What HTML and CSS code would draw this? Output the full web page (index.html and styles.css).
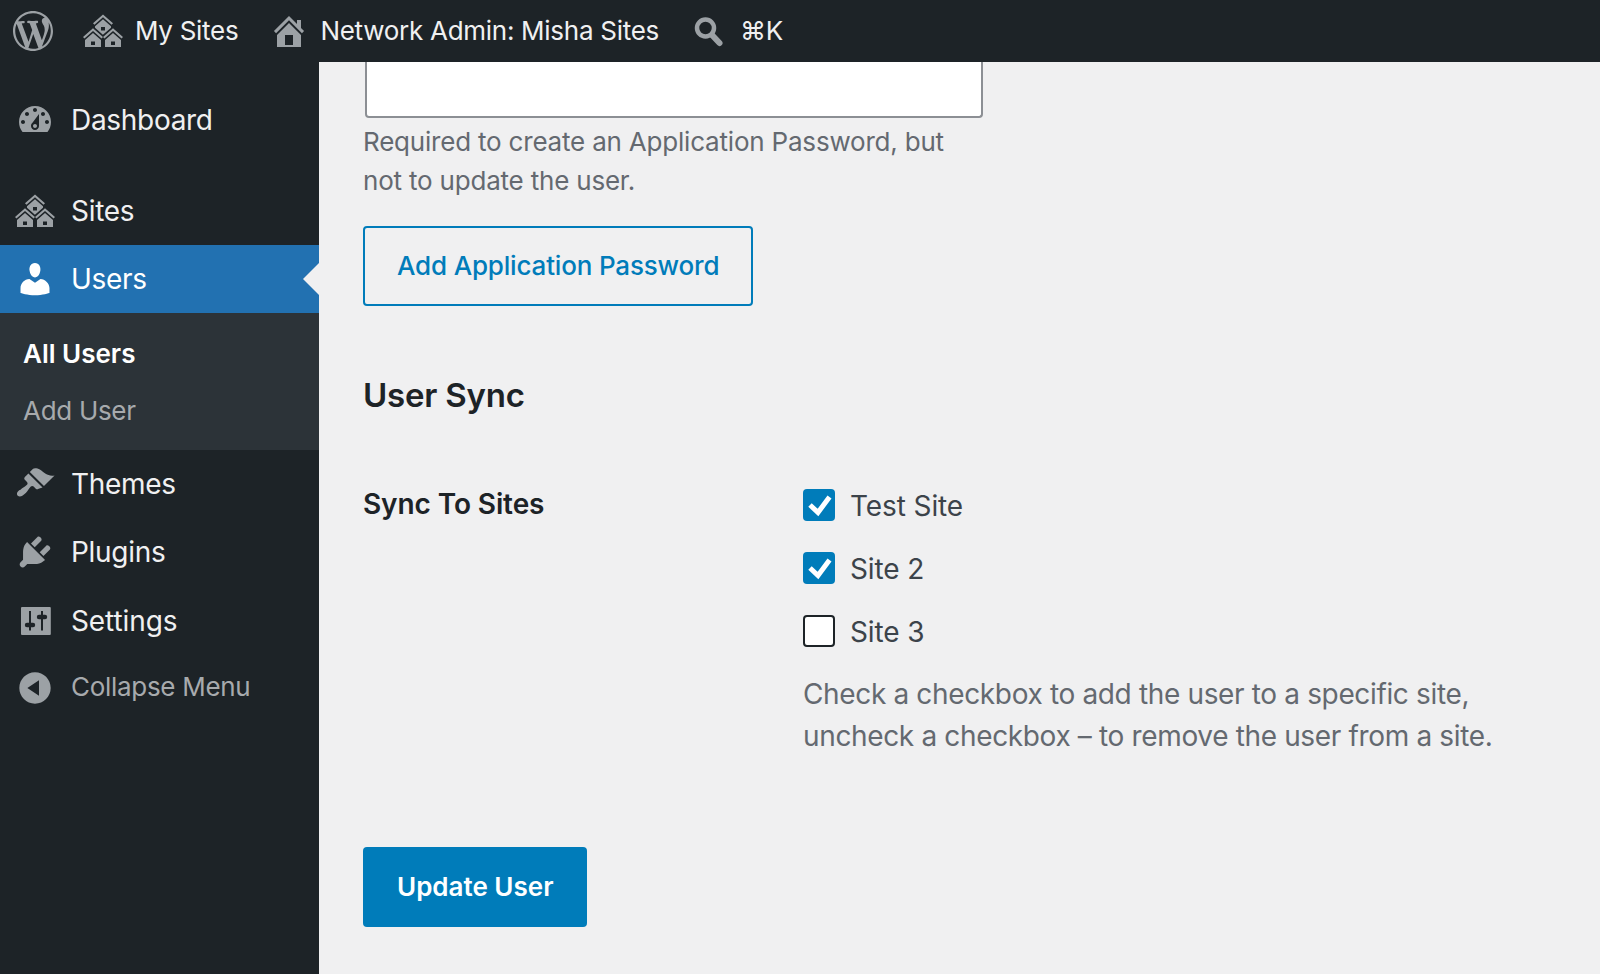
FILE: index.html
```html
<!DOCTYPE html>
<html lang="en">
<head>
<meta charset="utf-8">
<title>Users</title>
<link rel="stylesheet" href="styles.css">
</head>
<body>
<header class="topbar">
  <svg class="logo" viewBox="0 0 20 20"><path fill-rule="evenodd" d="M20 10c0-5.51-4.49-10-10-10C4.48 0 0 4.49 0 10c0 5.52 4.48 10 10 10 5.51 0 10-4.48 10-10zM7.78 15.37L4.37 6.22c.55-.02 1.17-.08 1.17-.08.5-.06.44-1.13-.06-1.11 0 0-1.45.11-2.37.11-.18 0-.37 0-.58-.01C4.12 2.69 6.87 1.11 10 1.11c2.33 0 4.45.87 6.05 2.34-.68-.11-1.65.39-1.65 1.58 0 .74.45 1.36.9 2.1.35.61.55 1.36.55 2.46 0 1.49-1.4 5-1.4 5l-3.03-8.37c.54-.02.82-.17.82-.17.5-.05.44-1.25-.06-1.22 0 0-1.44.12-2.38.12-.87 0-2.33-.12-2.33-.12-.5-.03-.56 1.2-.06 1.22l.92.08 1.26 3.41zM17.41 10c.24-.64.74-1.87.43-4.25.7 1.29 1.05 2.71 1.05 4.25 0 3.29-1.73 6.24-4.4 7.78.97-2.59 1.94-5.2 2.92-7.78zM6.1 18.09C3.12 16.65 1.11 13.53 1.11 10c0-1.3.23-2.48.72-3.59C3.25 10.3 4.67 14.2 6.1 18.09zm4.03-6.63l2.58 6.98c-.86.29-1.76.45-2.71.45-.79 0-1.57-.11-2.29-.33.81-2.38 1.62-4.74 2.42-7.1z"/></svg>
  <a class="bar-item sites">
    <svg class="bar-icon" viewBox="0 0 20 20"><path d="M14.27 6.87L10 3.14 5.73 6.87 5 6.14l5-4.38 5 4.38zM14 8.42l-4.05 3.43L6 8.38v-.74l4-3.5 4 3.5v.78zM11 9.7V8H9v1.7h2zm-1.73 4.03L5 10 .73 13.73 0 13l5-4.38L10 13zm10 0L15 10l-4.27 3.73L10 13l5-4.38L20 13zM5 11l4 3.5V18H1v-3.5zm10 0l4 3.5V18h-8v-3.5zM6 17v-1.7H4V17h2zm10 0v-1.7h-2V17h2z"/></svg>
    My Sites
  </a>
  <a class="bar-item network">
    <svg class="bar-icon" viewBox="0 0 20 20"><path d="M16 8.5l1.53 1.53-1.06 1.06L10 4.62l-6.47 6.47-1.06-1.06L10 2.5l4 4v-2h2v4zm-6-2.46l6 5.99V18H4v-5.97zM12 17v-5H8v5h4z"/></svg>
    Network Admin: Misha Sites
  </a>
  <a class="bar-item search">
    <svg class="search-icon" viewBox="0 0 30 34"><circle cx="11.5" cy="14" r="8.5"/><line class="handle" x1="18" y1="21" x2="25.5" y2="29"/></svg>
    ⌘K
  </a>
</header>
<div class="layout">
  <nav class="sidebar">
    <a class="menu-item first">
      <svg class="menu-icon" viewBox="0 0 20 20"><path fill-rule="evenodd" d="M3.76 16h12.48c1.1-1.37 1.76-3.11 1.76-5 0-4.42-3.58-8-8-8s-8 3.58-8 8c0 1.89.66 3.63 1.76 5zM10 4c.55 0 1 .45 1 1s-.45 1-1 1-1-.45-1-1 .45-1 1-1zM6 6c.55 0 1 .45 1 1s-.45 1-1 1-1-.45-1-1 .45-1 1-1zm8 0c.55 0 1 .45 1 1s-.45 1-1 1-1-.45-1-1 .45-1 1-1zm-5.37 5.55L12 7v6c0 1.1-.9 2-2 2s-2-.9-2-2c0-.57.24-1.08.63-1.45zM4 10c.55 0 1 .45 1 1s-.45 1-1 1-1-.45-1-1 .45-1 1-1zm12 0c.55 0 1 .45 1 1s-.45 1-1 1-1-.45-1-1 .45-1 1-1zm-5 3c0-.55-.45-1-1-1s-1 .45-1 1 .45 1 1 1 1-.45 1-1z"/></svg>
      Dashboard
    </a>
    <a class="menu-item sites-item">
      <svg class="menu-icon" viewBox="0 0 20 20"><path d="M14.27 6.87L10 3.14 5.73 6.87 5 6.14l5-4.38 5 4.38zM14 8.42l-4.05 3.43L6 8.38v-.74l4-3.5 4 3.5v.78zM11 9.7V8H9v1.7h2zm-1.73 4.03L5 10 .73 13.73 0 13l5-4.38L10 13zm10 0L15 10l-4.27 3.73L10 13l5-4.38L20 13zM5 11l4 3.5V18H1v-3.5zm10 0l4 3.5V18h-8v-3.5zM6 17v-1.7H4V17h2zm10 0v-1.7h-2V17h2z"/></svg>
      Sites
    </a>
    <a class="menu-item current">
      <svg class="menu-icon" viewBox="0 0 20 20"><path d="M10 9.25c-2.27 0-2.73-3.44-2.73-3.44C7 4.02 7.82 2 9.97 2c2.16 0 2.98 2.02 2.71 3.81 0 0-.41 3.44-2.68 3.44zm0 2.57L12.72 10c2.39 0 4.52 2.33 4.52 4.53v2.49s-3.65 1.13-7.24 1.13c-3.65 0-7.24-1.13-7.24-1.13v-2.49c0-2.25 1.94-4.48 4.47-4.48z"/></svg>
      Users
    </a>
    <div class="submenu">
      <a class="sub-item active">All Users</a>
      <a class="sub-item">Add User</a>
    </div>
    <a class="menu-item">
      <svg class="menu-icon" viewBox="0 0 20 20"><path d="M14.48 11.06L7.41 3.99l1.5-1.5c.5-.56 2.3-.47 3.51.32 1.21.8 1.43 1.28 2.91 2.1 1.18.64 2.45 1.26 4.45.85zm-.71.71L6.7 4.7 4.93 6.47c-.39.39-.39 1.02 0 1.41l1.06 1.06c.39.39.39 1.03 0 1.42-.6.6-1.43 1.11-2.21 1.69-.35.26-.7.53-1.01.84C1.43 13.23.4 14.85 1.4 15.86c.98 1 2.66-.03 3.99-1.36.31-.31.58-.65.84-1 .58-.79 1.1-1.62 1.69-2.21.39-.39 1.02-.39 1.41 0l1.06 1.06c.39.39 1.02.39 1.41 0z"/></svg>
      Themes
    </a>
    <a class="menu-item">
      <svg class="menu-icon" viewBox="0 0 20 20"><path d="M13.11 4.36L9.87 7.6 8 5.73l3.24-3.24c.35-.34 1.05-.2 1.56.32.52.51.66 1.21.31 1.55zm-8 1.77l.91-1.12 9.01 9.01-1.19.84c-.71.71-2.63 1.16-3.82 1.16H6.14L4.9 17.26c-.59.59-1.54.59-2.12 0-.59-.58-.59-1.53 0-2.12l1.24-1.24v-3.88c0-1.13.4-3.19 1.09-3.89zm7.26 3.97l3.24-3.24c.34-.35 1.04-.21 1.55.31.52.51.66 1.21.31 1.55l-3.24 3.25z"/></svg>
      Plugins
    </a>
    <a class="menu-item settings-item">
      <svg class="menu-icon" viewBox="0 0 20 20">
        <rect x="3" y="3.5" width="14.900" height="14" rx=".5"/>
        <line class="slider" x1="7.500" y1="5.500" x2="7.500" y2="15.300"/>
        <line class="slider" x1="13.500" y1="5.500" x2="13.500" y2="15.300"/>
        <line class="knob" x1="6" y1="12.500" x2="9" y2="12.500"/>
        <line class="knob" x1="12" y1="8.500" x2="15" y2="8.500"/>
      </svg>
      <span class="settings-label">Settings</span>
    </a>
    <a class="menu-item collapse">
      <svg class="menu-icon" viewBox="0 0 20 20"><path fill-rule="evenodd" d="M10 2.16c4.33 0 7.84 3.51 7.84 7.84s-3.51 7.84-7.84 7.84S2.16 14.33 2.16 10 5.71 2.16 10 2.16zm2 11.72V6.12L6.18 9.97z"/></svg>
      <span class="collapse-label">Collapse Menu</span>
    </a>
  </nav>
  <main class="content">
    <div class="input-stub"></div>
    <p class="hint">Required to create an Application Password, but<br>not to update the user.</p>
    <button class="btn btn-outline">Add Application Password</button>
    <h2 class="section-title">User Sync</h2>
    <div class="form-row">
      <div class="row-label">Sync To Sites</div>
      <div class="row-field">
        <label class="check-row"><span class="check on"><svg viewBox="0 0 32 32"><path d="M7 16l8 7.500L26.500 8"/></svg></span><span class="check-text">Test Site</span></label>
        <label class="check-row"><span class="check on"><svg viewBox="0 0 32 32"><path d="M7 16l8 7.500L26.500 8"/></svg></span><span class="check-text">Site 2</span></label>
        <label class="check-row"><span class="check"></span><span class="check-text">Site 3</span></label>
        <p class="field-desc">Check a checkbox to add the user to a specific site,<br>uncheck a checkbox – to remove the user from a site.</p>
      </div>
    </div>
    <button class="btn btn-primary">Update User</button>
  </main>
</div>
</body>
</html>
```
FILE: styles.css
```css
* { box-sizing: border-box; }
html, body { margin: 0; height: 100%; }
body {
  display: flex;
  flex-direction: column;
  height: 974px;
  overflow: hidden;
  background: #f0f0f1;
  font-family: Inter, "Liberation Sans", sans-serif;
  font-size: 28px;
  color: #3c434a;
}
svg { display: block; flex: none; fill: currentColor; }

.topbar {
  display: flex;
  align-items: center;
  height: 62px;
  flex: none;
  background: #1d2327;
  color: #f0f0f1;
  font-size: 26px;
  letter-spacing: -0.28px;
  padding-left: 13px;
}
.logo { width: 40px; height: 40px; color: #9ca1a5; }
.bar-item { display: flex; align-items: center; white-space: nowrap; line-height: 60px; }
.bar-icon { width: 40px; height: 40px; color: #9ca1a5; margin-right: 12px; }
.sites { margin-left: 30px; }
.network { margin-left: 31px; }
.network .bar-icon { margin-right: 11px; }
.search { margin-left: 35px; }
.search-icon { width: 30px; height: 34px; margin-right: 16px; fill: none; stroke: #9ca1a5; stroke-width: 4.5; stroke-linecap: round; }
.handle { stroke-width: 6; }

.layout { display: flex; flex: 1; min-height: 0; }
.sidebar {
  width: 319px;
  flex: none;
  background: #1d2327;
  color: #f0f0f1;
  padding-top: 24px;
  letter-spacing: -0.3px;
}
.menu-item {
  position: relative;
  display: flex;
  align-items: center;
  height: 68px;
  padding-left: 15px;
  font-size: 28px;
}
.menu-icon { width: 40px; height: 40px; margin-right: 16px; color: #9ca1a5; }
.sites-item { margin-top: 22px; height: 69px; }
.slider { stroke: #1d2327; stroke-width: 1; }
.knob { stroke: #1d2327; stroke-width: 2.200; stroke-linecap: round; }
.settings-label { margin-top: 2px; letter-spacing: -0.1px; }
.current { background: #2271b1; color: #fff; }
.current .menu-icon { color: #fff; }
.current::after {
  content: "";
  position: absolute;
  right: 0;
  top: 50%;
  margin-top: -16px;
  border: 16px solid transparent;
  border-left: 0;
  border-right-color: #f0f0f1;
}
.submenu {
  display: flex;
  flex-direction: column;
  height: 137px;
  padding-top: 12px;
  background: #2c3338;
  color: #a7aaad;
  font-size: 26px;
}
.sub-item { height: 57px; line-height: 57px; padding-left: 23px; }
.sub-item.active { color: #fff; font-weight: 600; letter-spacing: 0; }
.collapse { color: #a7aaad; font-size: 26px; }
.collapse-label { margin-top: -4px; }

.content { flex: 1; padding-left: 44px; min-width: 0; }
.input-stub {
  width: 618px;
  height: 56px;
  margin-left: 2px;
  background: #fff;
  border: 2px solid #8c8f94;
  border-top: 0;
  border-radius: 0 0 4px 4px;
}
.hint { margin: 4px 0 0; font-size: 26px; line-height: 39px; letter-spacing: -0.2px; color: #646970; }
.btn {
  display: block;
  height: 80px;
  padding: 0 32px;
  font: 500 26px Inter, "Liberation Sans", sans-serif;
  border-radius: 4px;
}
.btn-outline {
  margin-top: 26px;
  letter-spacing: -0.17px;
  background: transparent;
  border: 2px solid #007cba;
  color: #007cba;
  line-height: 74px;
}
.section-title {
  margin: 69px 0 0;
  font-size: 33px;
  line-height: 40px;
  font-weight: 600;
  letter-spacing: -0.2px;
  color: #1d2327;
}
.form-row { display: flex; margin-top: 68px; }
.row-label { width: 440px; flex: none; font-weight: 600; line-height: 42px; letter-spacing: -0.1px; color: #1d2327; }
.row-field { padding-top: 6px; }
.check-row { display: flex; align-items: center; height: 32px; margin-bottom: 31px; white-space: nowrap; }
.check {
  width: 32px;
  height: 32px;
  flex: none;
  margin-right: 15px;
  background: #fff;
  border: 2px solid #1d2327;
  border-radius: 4px;
}
.check.on { background: #007cba; border: 0; }
.check svg { width: 32px; height: 32px; fill: none; stroke: #fff; stroke-width: 5; }
.check-text { padding-top: 2px; letter-spacing: -0.1px; }
.field-desc { margin: -5px 0 0; line-height: 42px; letter-spacing: -0.35px; color: #646970; }
.btn-primary {
  margin-top: 90px;
  background: #007cba;
  border: 0;
  color: #fff;
  font-size: 26px;
  font-weight: 600;
  padding: 0 34px 2px;
}
```
